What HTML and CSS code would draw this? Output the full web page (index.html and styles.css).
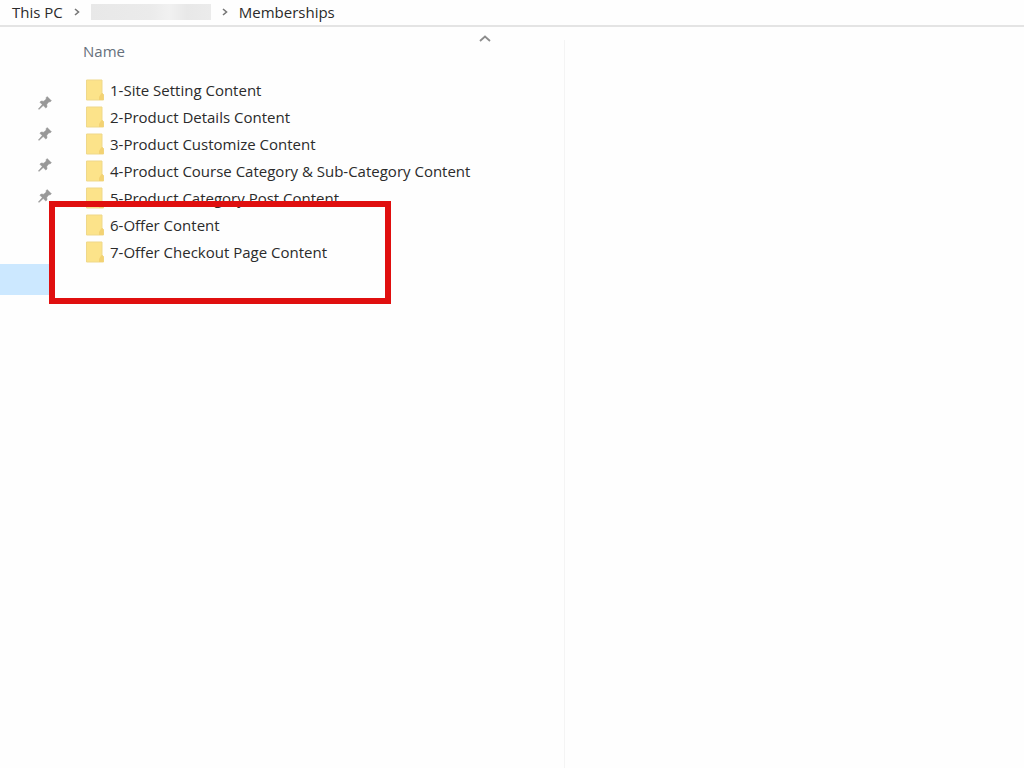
FILE: index.html
```
<!DOCTYPE html>
<html lang="en">
<head>
    <meta charset="UTF-8">
    <meta name="viewport" content="width=device-width, initial-scale=1.0">
    <title>Memberships</title>
    <link rel="stylesheet" href="styles.css">
</head>
<body>
    <svg class="defs" aria-hidden="true">
        <symbol id="pin" viewBox="0 0 14 14">
            <path d="M9.2 0.6 L13.4 4.8 L12 6 L11 5.8 L8.8 8.2 L9 11 L7.8 12 L5.2 9.6 L1 13.4 L0.4 12.9 L4.2 8.6 L1.9 6.2 L3 5 L5.8 5.2 L8.2 3 L8 1.8 Z" fill="#989898" stroke="#989898" stroke-width="0.5"/>
        </symbol>
        <symbol id="folder" viewBox="0 0 18 22">
            <path d="M0.5 1 H16 V14 L17.5 15.5 V21 H0.5 Z" fill="#fce38a" stroke="#efd88a"/>
            <path d="M15.5 14 L17.5 15.5 V21 H13 V18 Z" fill="#f3d273"/>
        </symbol>
        <symbol id="chevron" viewBox="0 0 6 8">
            <path d="M1 1 L4.5 4 L1 7" fill="none" stroke="#777" stroke-width="1.6"/>
        </symbol>
    </svg>

    <nav class="address-bar" aria-label="Address">
        <a href="#">This PC</a>
        <svg class="chevron"><use href="#chevron"/></svg>
        <a href="#" class="hidden-name" aria-label="Folder"></a>
        <svg class="chevron"><use href="#chevron"/></svg>
        <a href="#">Memberships</a>
    </nav>

    <main class="explorer">
        <aside class="sidebar">
            <ul class="pins">
                <li><svg><use href="#pin"/></svg></li>
                <li><svg><use href="#pin"/></svg></li>
                <li><svg><use href="#pin"/></svg></li>
                <li><svg><use href="#pin"/></svg></li>
            </ul>
            <div class="selected"></div>
        </aside>

        <section class="files">
            <div class="columns">
                <button type="button">Name</button>
                <svg class="sort" viewBox="0 0 12 7"><path d="M1 6 L6 1.5 L11 6" fill="none" stroke="#8c8c8c" stroke-width="1.8"/></svg>
            </div>
            <ul class="folders">
                <li><a href="#"><svg><use href="#folder"/></svg>1-Site Setting Content</a></li>
                <li><a href="#"><svg><use href="#folder"/></svg>2-Product Details Content</a></li>
                <li><a href="#"><svg><use href="#folder"/></svg>3-Product Customize Content</a></li>
                <li><a href="#"><svg><use href="#folder"/></svg>4-Product Course Category &amp; Sub-Category Content</a></li>
                <li><a href="#"><svg><use href="#folder"/></svg>5-Product Category Post Content</a></li>
                <li><a href="#"><svg><use href="#folder"/></svg>6-Offer Content</a></li>
                <li><a href="#"><svg><use href="#folder"/></svg>7-Offer Checkout Page Content</a></li>
            </ul>
            <div class="highlight"></div>
        </section>

        <section class="preview"></section>
    </main>
</body>
</html>
```

FILE: styles.css
```
* {
    box-sizing: border-box;
}
body {
    margin: 0;
    min-height: 100vh;
    display: flex;
    flex-direction: column;
    background-color: #fefefe;
    color: #2b2b2b;
    font-family: "Open Sans", "Noto Sans", sans-serif;
    font-size: 15px;
}
ul {
    list-style: none;
    margin: 0;
    padding: 0;
}
a {
    color: inherit;
    text-decoration: none;
}
.defs {
    display: none;
}
.address-bar {
    display: flex;
    align-items: center;
    gap: 11px;
    height: 27px;
    padding: 0 12px 2px;
    border-bottom: 2px solid #e4e4e4;
}
.chevron {
    width: 6px;
    height: 8px;
}
.hidden-name {
    width: 120px;
    height: 16px;
    background: linear-gradient(90deg, #e8e8e8, #ebebeb 50%, #f1f1f1 65%, #e8e8e8 80%, #ebebeb);
}
.explorer {
    flex: 1;
    display: flex;
}
.sidebar {
    width: 60px;
    padding-top: 60px;
}
.pins li {
    display: flex;
    align-items: center;
    height: 31px;
    padding-left: 38px;
}
.pins svg {
    width: 14px;
    height: 14px;
}
.selected {
    height: 31px;
    margin: 53px 10px 0 0;
    background-color: #cce8ff;
}
.files {
    position: relative;
    flex: 0 1 504px;
}
.columns {
    display: flex;
    align-items: flex-start;
    height: 49px;
    padding: 8px 73px 0 23px;
}
.columns button {
    flex: 1;
    padding: 5px 0;
    border: none;
    background: none;
    color: #66707c;
    font: inherit;
    line-height: 22px;
    text-align: left;
}
.sort {
    width: 12px;
    height: 7px;
}
.folders a {
    display: flex;
    align-items: center;
    gap: 6px;
    height: 27px;
    padding-left: 26px;
    white-space: nowrap;
}
.folders svg {
    width: 18px;
    height: 22px;
}
/* red frame drawn over the offer folders */
.highlight {
    position: absolute;
    top: 174px;
    left: -11px;
    width: 342px;
    height: 103px;
    border: 6px solid #e00f0f;
}
.preview {
    flex: 1;
    margin-top: 13px;
    border-left: 1px solid #f4f4f4;
}
```
